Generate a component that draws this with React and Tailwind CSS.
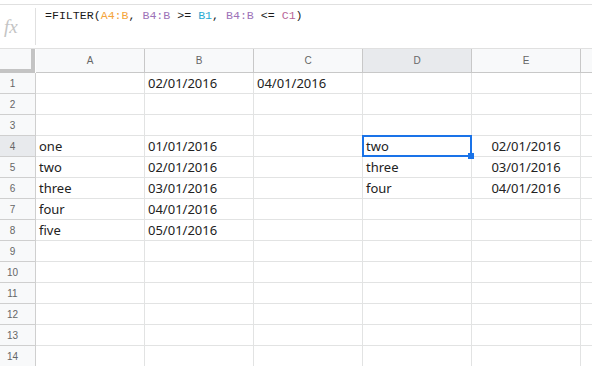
import React from "react";

const COLS = ["A", "B", "C", "D", "E"];

const DATA = {
  1: { B: "02/01/2016", C: "04/01/2016" },
  4: { A: "one", B: "01/01/2016", D: "two", E: "02/01/2016" },
  5: { A: "two", B: "02/01/2016", D: "three", E: "03/01/2016" },
  6: { A: "three", B: "03/01/2016", D: "four", E: "04/01/2016" },
  7: { A: "four", B: "04/01/2016" },
  8: { A: "five", B: "05/01/2016" },
};

function Cell({ value, col, row }) {
  const selected = col === "D" && row === 4;
  const center = col === "E";
  return (
    <div
      className={
        "relative h-[21px] border-r border-b border-[#e2e3e3] flex items-center px-[3px] text-[13px] text-[#222] whitespace-nowrap " +
        (center ? "justify-center" : "justify-start") +
        (selected ? " z-10" : "")
      }
      style={{ fontFamily: '"Noto Sans", "Open Sans", sans-serif' }}
    >
      <span className="leading-none pt-[1px]">{value || ""}</span>
      {selected && (
        <>
          <div className="absolute -left-[1px] -top-[1px] w-[110px] h-[22px] border-2 border-[#1a73e8]" />
          <div className="absolute -right-[3px] -bottom-[3px] w-[6px] h-[6px] bg-[#1a73e8]" />
        </>
      )}
    </div>
  );
}

export default function App() {
  const rows = Array.from({ length: 14 }, (_, i) => i + 1);
  return (
    <div className="w-[592px] h-[366px] overflow-hidden bg-white">
      <div className="h-[4px]" />
      <div className="h-[45px] border-y border-[#e0e0e0] flex">
        <div className="w-[35px] flex items-center pl-[4px]">
          <span
            className="italic text-[19px] text-[#c4c4c4] leading-none"
            style={{ fontFamily: '"Liberation Serif", serif' }}
          >
            fx
          </span>
        </div>
        <div className="w-px bg-[#e0e0e0] my-[3px]" />
        <div
          className="pl-[9px] pt-[4px] text-[11.6px] leading-[14px] text-[#1a1a1a] whitespace-nowrap"
          style={{ fontFamily: '"Liberation Mono", monospace' }}
        >
          =FILTER(<span className="text-[#f4a43a]">A4:B</span>,{" "}
          <span className="text-[#9d72b8]">B4:B</span> &gt;={" "}
          <span className="text-[#2aaad2]">B1</span>,{" "}
          <span className="text-[#9d72b8]">B4:B</span> &lt;={" "}
          <span className="text-[#b8669a]">C1</span>)
        </div>
      </div>

      <div className="grid grid-cols-[36px_109px_109px_109px_109px_109px_1fr]">
        <div className="h-[24px] bg-[#f8f9fa] border-r-[4px] border-b-[4px] border-[#c4c4c4] mr-[1px] w-[35px]" />
        {COLS.map((c) => (
          <div
            key={c}
            className={
              "h-[24px] border-r border-b border-[#c8c8c8] flex items-center justify-center text-[10px] text-[#666] " +
              (c === "D" ? "bg-[#e8eaed]" : "bg-[#f8f9fa]")
            }
            style={{ fontFamily: '"Liberation Sans", Arial, sans-serif' }}
          >
            {c}
          </div>
        ))}
        <div className="h-[24px] border-b border-[#c8c8c8] bg-[#f8f9fa]" />

        {rows.map((r) => (
          <React.Fragment key={r}>
            <div
              className={
                "h-[21px] border-r border-b border-[#cfcfcf] flex items-center text-[10px] text-[#666] " +
                (r === 4 ? "bg-[#e8eaed]" : "bg-[#f8f9fa]")
              }
              style={{ fontFamily: '"Liberation Sans", Arial, sans-serif' }}
            >
              <span className="w-[25px] text-center">{r}</span>
            </div>
            {COLS.map((c) => (
              <Cell key={c} col={c} row={r} value={DATA[r] && DATA[r][c]} />
            ))}
            <div className="h-[21px] border-b border-[#e2e3e3]" />
          </React.Fragment>
        ))}
      </div>
    </div>
  );
}
